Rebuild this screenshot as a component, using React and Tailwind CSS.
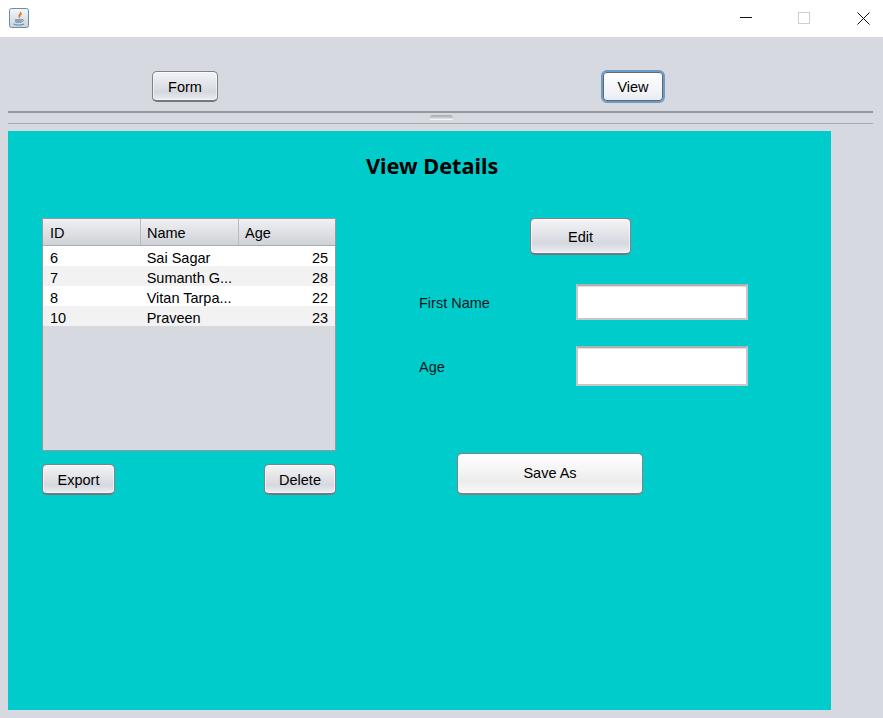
const sans = "font-['Liberation_Sans',Arial,sans-serif]";

const rows = [
  { id: "6", name: "Sai Sagar", age: "25" },
  { id: "7", name: "Sumanth G...", age: "28" },
  { id: "8", name: "Vitan Tarpa...", age: "22" },
  { id: "10", name: "Praveen", age: "23" }
];

function JavaIcon() {
  return (
    <svg width="20" height="20" viewBox="0 0 20 20" className="ml-[9px] mt-[8px] block">
      <defs>
        <linearGradient id="iconBg" x1="0" y1="0" x2="0" y2="1">
          <stop offset="0" stopColor="#f4f6f8" />
          <stop offset="1" stopColor="#c9d3dc" />
        </linearGradient>
      </defs>
      <rect x="0.5" y="0.5" width="19" height="19" rx="2" fill="url(#iconBg)" stroke="#6f8ca3" />
      <path d="M10.5 3 C12.5 5 8.5 6.5 9.5 9 C10 10 11 10.5 11 10.5 C10 8.5 13.5 7 12.5 5 C12 4 11 3.5 10.5 3 Z" fill="#e8792b" />
      <path d="M6 11 H13 V13.5 C13 14.5 12 15 10.5 15 H8.5 C7 15 6 14.5 6 13.5 Z" fill="#8aa4bb" />
      <path d="M13 11.5 C15 11 15 13.5 13 13.5" fill="none" stroke="#6f8ca3" />
      <path d="M4.5 16 C7 17.5 12 17.5 15 16" fill="none" stroke="#5f7f99" />
    </svg>
  );
}

function TitleBar() {
  return (
    <div className="flex h-[37px] justify-between bg-white">
      <JavaIcon />
      <div className="flex">
        <svg width="12" height="12" viewBox="0 0 12 12" className="mt-[12px] mr-[46px]">
          <path d="M0 5.5 H12" stroke="#111" />
        </svg>
        <svg width="12" height="12" viewBox="0 0 12 12" className="mt-[12px] mr-[47px]">
          <rect x="0.5" y="0.5" width="11" height="11" fill="none" stroke="#cfcfcf" />
        </svg>
        <svg width="13" height="13" viewBox="0 0 13 13" className="mt-[12px] mr-[13px]">
          <path d="M0.5 0.5 L12.5 12.5 M12.5 0.5 L0.5 12.5" stroke="#111" />
        </svg>
      </div>
    </div>
  );
}

function Button({ className, children }) {
  return (
    <button
      className={`flex items-center justify-center rounded-[5px] border border-[#7f8289] border-b-2 border-b-[#74777e] bg-[linear-gradient(#f3f4f6_0%,#e1e3e8_45%,#d5d8df_72%,#eceef2_100%)] pt-[3px] text-[14.5px] text-black shadow-[inset_0_0_0_1px_rgba(255,255,255,0.55)] ${className}`}
    >
      {children}
    </button>
  );
}

function PeopleTable() {
  return (
    <div className="h-[233px] w-[294px] border border-[#8f9ca3] bg-[#d6d9e0] text-[14.5px] leading-none text-black">
      <div className="flex h-[27px] border-b border-[#a9acb3] bg-[linear-gradient(#eef0f3,#dcdee3_60%,#cfd2d8)]">
        <div className="flex h-full w-[98px] items-center border-r border-[#b8bbc2] pl-[7px] pt-[2px]">ID</div>
        <div className="flex h-full w-[98px] items-center border-r border-[#b8bbc2] pl-[6px] pt-[2px]">Name</div>
        <div className="flex h-full flex-1 items-center pl-[6px] pt-[2px]">Age</div>
      </div>
      {rows.map((row, index) => (
        <div key={row.id} className={`flex h-[20px] items-center pt-[4px] ${index % 2 ? "bg-[#f2f2f3]" : "bg-white"}`}>
          <div className="flex-1 pl-[7px]">{row.id}</div>
          <div className="flex-1 whitespace-nowrap pl-[6px]">{row.name}</div>
          <div className="flex-1 pr-[7px] text-right">{row.age}</div>
        </div>
      ))}
    </div>
  );
}

function Field({ label, className }) {
  return (
    <div className={`flex items-center ${className}`}>
      <span className="w-[157px] pt-[4px] text-[14.5px] text-[#06191a]">{label}</span>
      <div className="h-full w-[172px] border-2 border-[#c6c8ca] border-t-[#aeb0b2] bg-white shadow-[inset_0_1px_1px_#dddddd]" />
    </div>
  );
}

export default function App() {
  return (
    <div className={`h-[718px] w-[883px] overflow-hidden bg-[#d6d9e0] ${sans}`}>
      <TitleBar />

      <div className="flex h-[74px] pl-[152px]">
        <Button className="mt-[34px] h-[31px] w-[66px]">Form</Button>
        <button className="ml-[383px] mt-[33px] flex h-[33px] w-[64px] items-center justify-center rounded-[6px] border-2 border-[#6c9ac9] bg-[linear-gradient(#ffffff,#f1f3f7_70%,#e7eaf0)] pt-[2px] text-[14.5px] text-black shadow-[inset_0_0_0_1px_#5f6873]">
          View
        </button>
      </div>

      <div className="ml-[8px] h-[13px] w-[865px] border-t-2 border-b border-t-[#97999f] border-b-[#a9abb2]">
        <div className="ml-[422px] mt-[2px] h-[5px] w-[23px] rounded-t-[3px] bg-[linear-gradient(#a5a9b3,#c4c7ce_50%,#ffffff)]" />
      </div>

      <div className="ml-[8px] mt-[7px] h-[579px] w-[823px] bg-[#00cccc] pt-[7px]">
        <h1 className="ml-[358px] w-[132px] whitespace-nowrap font-['Noto_Sans',sans-serif] text-[21.7px] font-bold leading-[56px] text-black">
          View Details
        </h1>

        <div className="mt-[24px] flex pl-[34px]">
          <div>
            <PeopleTable />
            <div className="mt-[13px] flex w-[294px] justify-between">
              <Button className="h-[31px] w-[73px]">Export</Button>
              <Button className="h-[31px] w-[72px]">Delete</Button>
            </div>
          </div>

          <div className="ml-[83px]">
            <Button className="ml-[111px] h-[37px] w-[101px]">Edit</Button>
            <Field label="First Name" className="mt-[29px] h-[36px]" />
            <Field label="Age" className="mt-[26px] h-[40px]" />
            <button className="ml-[38px] mt-[67px] flex h-[42px] w-[186px] items-center justify-center rounded-[5px] border border-[#7f8289] border-b-2 bg-[linear-gradient(#ffffff,#f1f1f2_55%,#ececed_70%,#f8f8f9)] text-[14.5px] text-black">
              Save As
            </button>
          </div>
        </div>
      </div>
    </div>
  );
}
